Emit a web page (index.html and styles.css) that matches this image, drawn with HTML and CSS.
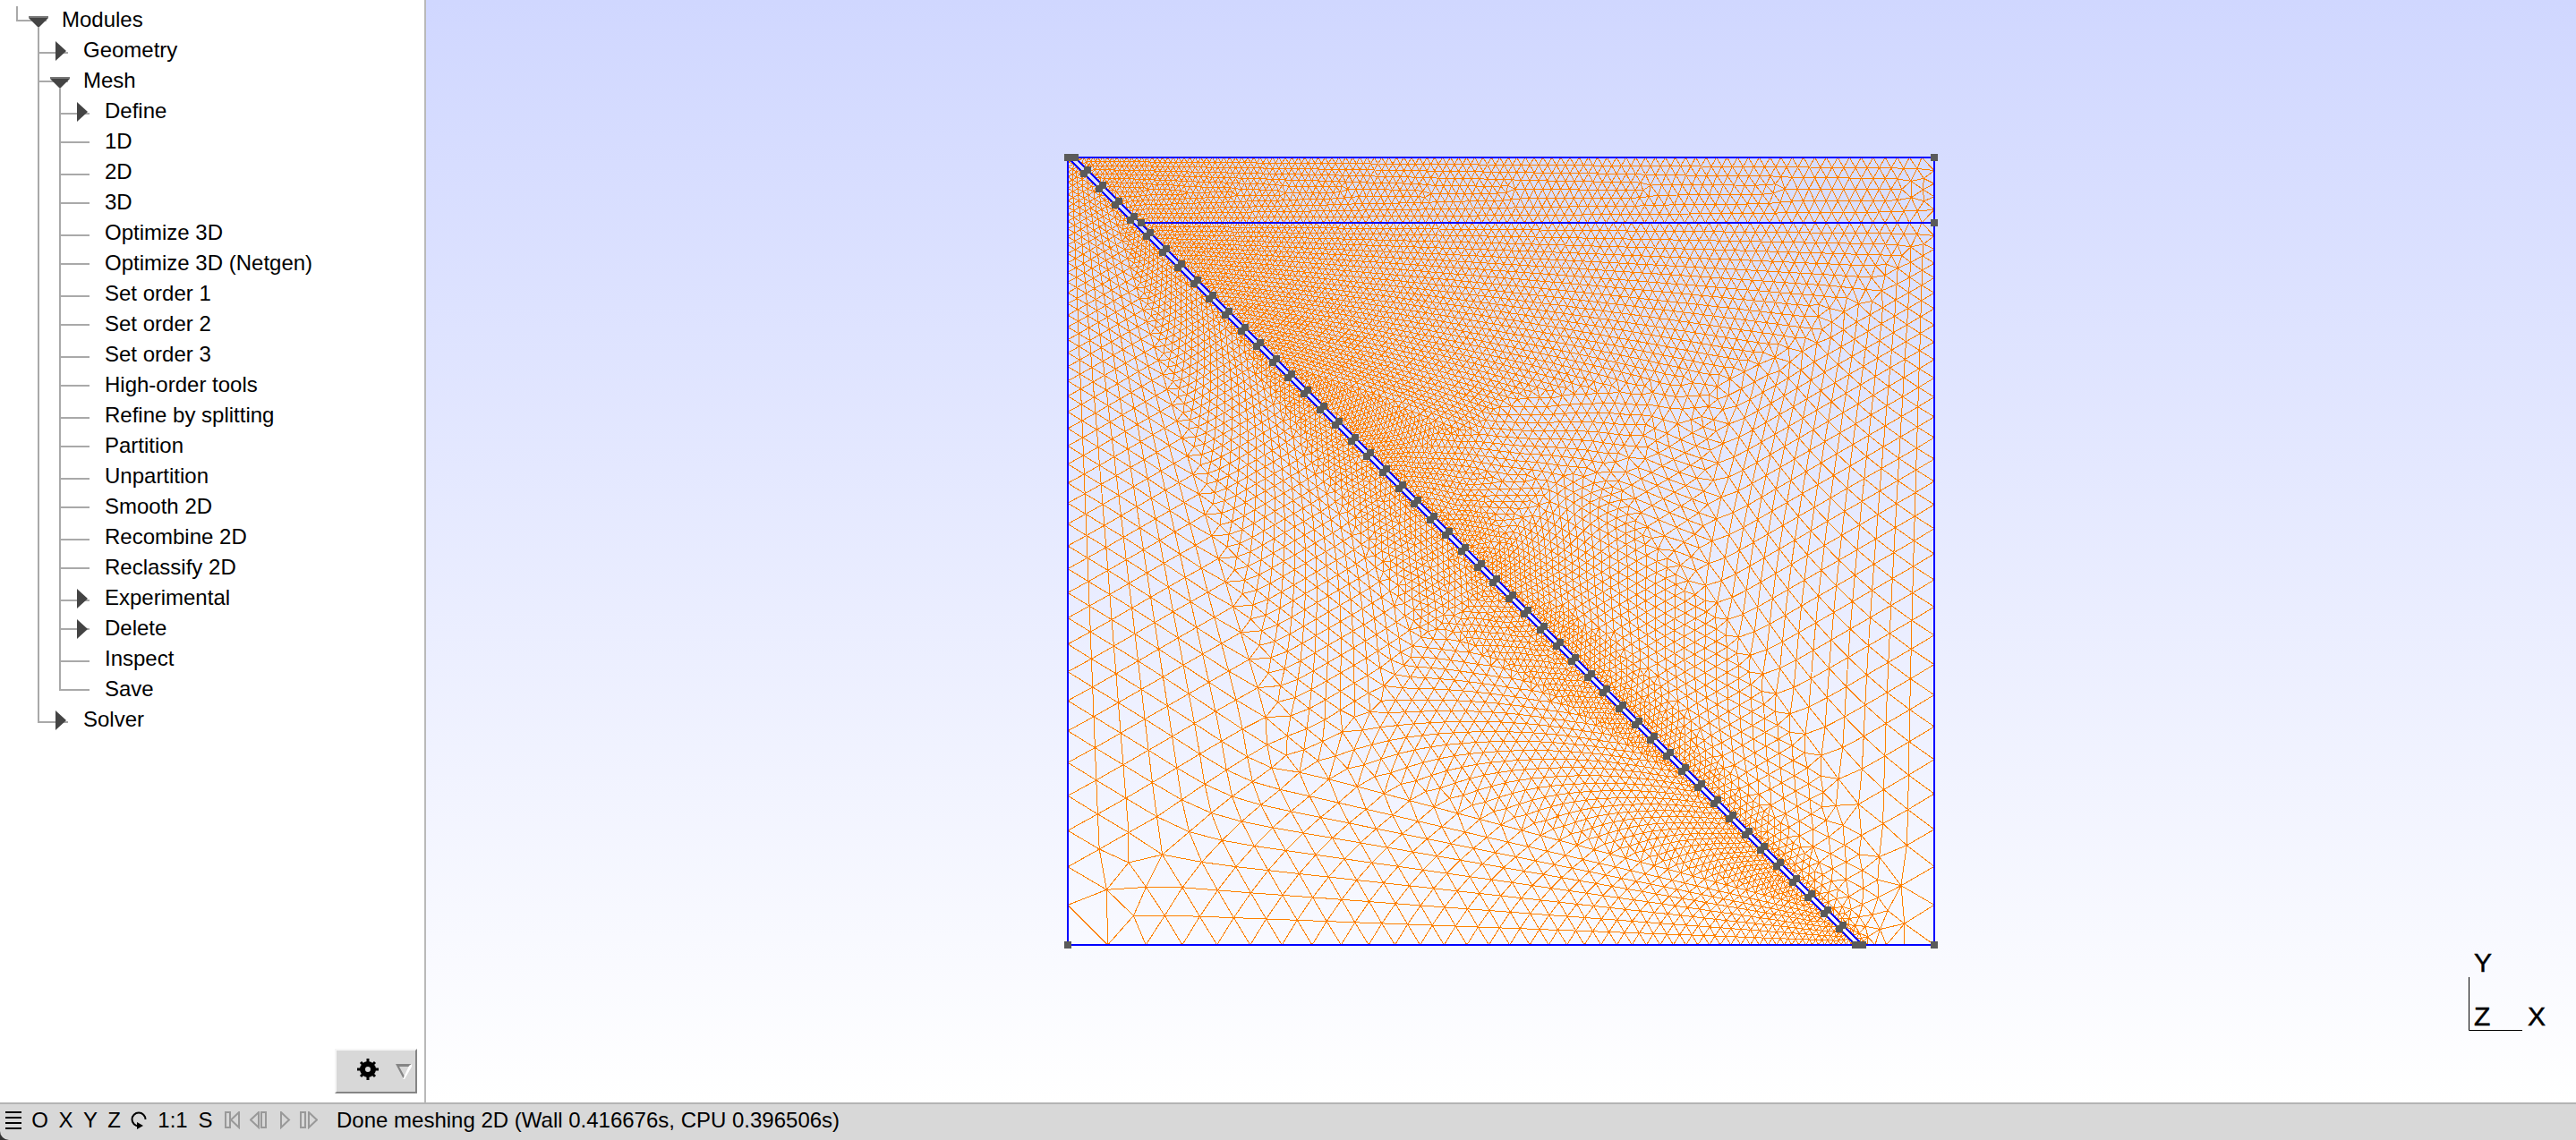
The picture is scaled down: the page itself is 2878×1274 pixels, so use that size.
FILE: index.html
```html
<!DOCTYPE html>
<html lang="en">
<head>
<meta charset="utf-8">
<title>Gmsh</title>
<link rel="stylesheet" href="styles.css">
</head>
<body>
<svg width="0" height="0" class="defs" aria-hidden="true">
  <symbol id="open" viewBox="0 0 50 34"><path d="M14 14H36V16L26 26H24L14 16Z" fill="#444"/><path d="M14 14H36V16H14Z" fill="#777"/></symbol>
  <symbol id="closed" viewBox="0 0 50 34"><path d="M20 8L32 19L20 30Z" fill="#444"/></symbol>
</svg>
<div class="app">
  <div class="work">
    <aside class="side">
      <ul class="tree">
        <li>
          <button class="row"><svg><use href="#open"/></svg>Modules</button>
          <ul class="branch">
            <li><button class="row"><svg><use href="#closed"/></svg>Geometry</button></li>
            <li>
              <button class="row"><svg><use href="#open"/></svg>Mesh</button>
              <ul class="branch">
                <li><button class="row"><svg><use href="#closed"/></svg>Define</button></li>
                <li><button class="row leaf">1D</button></li>
                <li><button class="row leaf">2D</button></li>
                <li><button class="row leaf">3D</button></li>
                <li><button class="row leaf">Optimize 3D</button></li>
                <li><button class="row leaf">Optimize 3D (Netgen)</button></li>
                <li><button class="row leaf">Set order 1</button></li>
                <li><button class="row leaf">Set order 2</button></li>
                <li><button class="row leaf">Set order 3</button></li>
                <li><button class="row leaf">High-order tools</button></li>
                <li><button class="row leaf">Refine by splitting</button></li>
                <li><button class="row leaf">Partition</button></li>
                <li><button class="row leaf">Unpartition</button></li>
                <li><button class="row leaf">Smooth 2D</button></li>
                <li><button class="row leaf">Recombine 2D</button></li>
                <li><button class="row leaf">Reclassify 2D</button></li>
                <li><button class="row"><svg><use href="#closed"/></svg>Experimental</button></li>
                <li><button class="row"><svg><use href="#closed"/></svg>Delete</button></li>
                <li><button class="row leaf">Inspect</button></li>
                <li><button class="row leaf">Save</button></li>
              </ul>
            </li>
            <li><button class="row"><svg><use href="#closed"/></svg>Solver</button></li>
          </ul>
        </li>
      </ul>
      <button class="gear" aria-label="Options">
        <svg width="88" height="46" viewBox="0 0 88 46">
          <g transform="translate(35 21)">
            <circle r="6" fill="none" stroke="#000" stroke-width="6"/>
            <g stroke="#000" stroke-width="3">
              <path d="M0 -12V-7M0 12V7M-12 0H-7M12 0H7M-8 -8L-5 -5M8 8L5 5M-8 8L-5 5M8 -8L5 -5"/>
            </g>
          </g>
          <path d="M66 15H84L82 18H70L76 29L75 32Z" fill="#858585"/>
          <path d="M84 15V18L76 32H74L81 17Z" fill="#fff"/>
        </svg>
      </button>
    </aside>
    <main class="view">
      <svg class="scene" viewBox="0 0 2402 1232">
        <path id="mesh" class="mesh"/>
        <path class="edge" d="M717 176H1685V1056H717ZM799 249H1685"/>
        <path class="fault" d="M717 176L1597 1056M725 176L1605 1056" stroke-width="1.5"/>
        <path id="nodes" class="nodes"/>
      </svg>
      <svg class="axes" width="92" height="108" viewBox="0 0 92 108">
        <path d="M2.500 44V103.500H62" fill="none" stroke="#000"/>
        <g stroke="#000" stroke-width="0.5">
          <text x="8" y="38">Y</text>
          <text x="8" y="98">Z</text>
          <text x="68" y="98">X</text>
        </g>
      </svg>
    </main>
  </div>
  <footer class="status">
    <div class="tools">
      <button class="w18" aria-label="Menu"><svg width="18" height="20" viewBox="0 0 18 20"><path d="M0 1H18M0 7H18M0 13H18M0 19H18" stroke="#000" stroke-width="2"/></svg></button>
      <button class="w19">O</button>
      <button class="w17">X</button>
      <button class="w16">Y</button>
      <button class="w15">Z</button>
      <button class="w18" aria-label="Rotate"><svg width="18" height="20" viewBox="0 0 18 20"><path d="M16.500 9A7.500 7.500 0 1 0 9 16.500" fill="none" stroke="#000" stroke-width="2"/><path d="M7 12L14 16L7 20Z"/></svg></button>
      <button class="w36">1:1</button>
      <button class="w15">S</button>
    </div>
    <div class="player">
      <button aria-label="Rewind"><svg width="20" height="20" viewBox="0 0 20 20"><path d="M1 1H6V18H1ZM16 1V18L7 9.500Z"/></svg></button>
      <button aria-label="Step back"><svg width="20" height="20" viewBox="0 0 20 20"><path d="M18 1H13V18H18ZM10 1V18L1 9.500Z"/></svg></button>
      <button aria-label="Play"><svg width="20" height="20" viewBox="0 0 20 20"><path d="M7 1V18L16 9.500Z"/></svg></button>
      <button aria-label="Step forward"><svg width="20" height="20" viewBox="0 0 20 20"><path d="M1 1H6V18H1ZM10 1V18L19 9.500Z"/></svg></button>
    </div>
    <output class="message">Done meshing 2D (Wall 0.416676s, CPU 0.396506s)</output>
  </footer>
</div>
<script src="mesh.js"></script>
</body>
</html>
```
FILE: styles.css
```css
* { box-sizing: border-box; }
html, body { height: 100%; margin: 0; }
body {
  font: 24px/34px "Liberation Sans", Arial, sans-serif;
  color: #000;
  background: #333;
}
button {
  font: inherit;
  color: inherit;
  background: none;
  border: 0;
  padding: 0;
  display: flex;
  align-items: center;
}
ul { list-style: none; margin: 0; padding: 0; }
svg { display: block; flex: none; }
.defs { position: absolute; }

.app { display: flex; flex-direction: column; height: 100vh; }
.work { display: flex; flex: 1; min-height: 0; }

.side {
  display: flex;
  flex-direction: column;
  justify-content: space-between;
  width: 476px;
  flex: none;
  padding: 4px 8px 10px 0;
  background: #fff;
  border-right: 2px solid #b9b9b9;
}
.tree { padding-left: 18px; }
.tree li {
  --y: 18px;
  background:
    linear-gradient(#a9a9a9, #a9a9a9) 0 var(--y) / 34px 2px no-repeat,
    linear-gradient(#a9a9a9, #a9a9a9) 0 0 / 2px 100% no-repeat;
}
.branch > li:nth-child(odd) { --y: 20px; }
.branch > li:last-child {
  background:
    linear-gradient(#a9a9a9, #a9a9a9) 0 var(--y) / 34px 2px no-repeat,
    linear-gradient(#a9a9a9, #a9a9a9) 0 0 / 2px var(--y) no-repeat;
}
.tree > li {
  background:
    linear-gradient(#a9a9a9, #a9a9a9) 0 var(--y) / 34px 2px no-repeat,
    linear-gradient(#a9a9a9, #a9a9a9) 0 3px / 2px 15px no-repeat;
}
.branch {
  margin: -8px 0 0 24px;
  padding-top: 8px;
  background: linear-gradient(#a9a9a9, #a9a9a9) 0 0 / 2px 8px no-repeat;
}
.row {
  height: 34px;
  line-height: 36px;
  align-items: flex-start;
  white-space: nowrap;
}
.row svg { width: 50px; height: 34px; margin-right: 1px; }
.leaf { padding-left: 51px; }
.gear {
  align-self: flex-end;
  background: #d8d8d8;
  border: 2px solid;
  border-color: #f6f6f6 #858585 #858585 #f6f6f6;
}

.view {
  position: relative;
  flex: 1;
  min-width: 0;
  background: linear-gradient(#d0d7ff, #fff);
}
.scene { width: 100%; height: 100%; shape-rendering: crispEdges; }
.mesh { fill: none; stroke: #ff8000; stroke-width: 1px; }
.edge { fill: none; stroke: #00f; stroke-width: 2px; }
.fault { fill: none; stroke: #00f; }
.nodes { fill: #5a5a5a; }
.axes { position: absolute; right: 30px; bottom: 76px; font-size: 30px; }

.status {
  display: flex;
  align-items: center;
  flex: none;
  height: 42px;
  padding: 0 6px 4px;
  background: #d8d8d8;
  border-top: 2px solid #b4b4b4;
  border-bottom-left-radius: 10px;
  white-space: nowrap;
}
.status button { justify-content: center; }
.tools { display: flex; gap: 11px; }
.player { display: flex; gap: 8px; margin: 0 21px 0 14px; }
.player path { fill: none; stroke: #999; stroke-width: 2px; }
.w15 { width: 15px; }
.w16 { width: 16px; }
.w17 { width: 17px; }
.w18 { width: 18px; }
.w19 { width: 19px; }
.w36 { width: 36px; }
```
FILE: mesh.js
```js
// Triangulates the three faces around the fault and draws the result.
const L = 717, T = 176, R = 1685, B = 1056, MID = 249;
const SMALL = 5, SEGMENTS = 50, STEP = (B - T) / SEGMENTS;

// "fault" is the index of the polygon side that lies on the fault.
const faces = [
  {
    poly: [[L, T], [1597, B], [L, B]],
    fault: 0,
    size: (x, y) => SMALL + 41 * Math.max(0, (y - T) - (x - L)) / (B - T)
  },
  {
    poly: [[725, T], [R, T], [R, MID], [798, MID]],
    fault: 3,
    size: (x) => SMALL + 9 * Math.max(0, (x - 725) / (R - 725))
  },
  {
    poly: [[798, MID], [R, MID], [R, B], [1605, B]],
    fault: 3,
    size: (x, y) => {
      const xd = 798 + (y - MID);
      const t = Math.min(1, Math.max(0, (x - xd) / (R - xd)));
      return SMALL + (9 + 31 * (y - MID) / (B - MID)) * Math.pow(t, 1.1);
    }
  }
];

let seed = 7;
const rnd = () => (seed = (seed * 16807) % 2147483647) / 2147483647;

function splitEdge(a, b, size) {
  const len = Math.hypot(b[0] - a[0], b[1] - a[1]);
  const n = 400, acc = [0];
  for (let i = 1; i <= n; i++) {
    const t = (i - 0.5) / n;
    acc.push(acc[i - 1] + len / n / size(a[0] + (b[0] - a[0]) * t, a[1] + (b[1] - a[1]) * t));
  }
  const count = Math.max(1, Math.round(acc[n])), out = [];
  let j = 0;
  for (let k = 0; k < count; k++) {
    const goal = acc[n] * k / count;
    while (j < n && acc[j + 1] <= goal) j++;
    const t = (j + (goal - acc[j]) / (acc[j + 1] - acc[j])) / n;
    out.push([a[0] + (b[0] - a[0]) * t, a[1] + (b[1] - a[1]) * t]);
  }
  return out;
}

function fill(face) {
  const { poly, size } = face;
  const cx = poly.reduce((s, p) => s + p[0], 0) / poly.length;
  const cy = poly.reduce((s, p) => s + p[1], 0) / poly.length;
  const sides = poly.map((a, i) => {
    const b = poly[(i + 1) % poly.length];
    const len = Math.hypot(b[0] - a[0], b[1] - a[1]);
    let nx = -(b[1] - a[1]) / len, ny = (b[0] - a[0]) / len;
    if ((cx - a[0]) * nx + (cy - a[1]) * ny < 0) { nx = -nx; ny = -ny; }
    return { a, b, nx, ny };
  });
  const pts = [], grid = new Map(), cell = 10;
  const key = (i, j) => i * 1000 + j;
  const add = (x, y, ang) => {
    pts.push([x, y, ang]);
    const k = key(Math.floor(x / cell), Math.floor(y / cell));
    if (!grid.has(k)) grid.set(k, []);
    grid.get(k).push(pts.length - 1);
  };
  const free = (x, y, r) => {
    const n = Math.ceil(r / cell), gi = Math.floor(x / cell), gj = Math.floor(y / cell);
    for (let i = gi - n; i <= gi + n; i++) for (let j = gj - n; j <= gj + n; j++) {
      const list = grid.get(key(i, j));
      if (list) for (const q of list) {
        if (Math.hypot(pts[q][0] - x, pts[q][1] - y) < r) return false;
      }
    }
    return true;
  };
  const queue = [], late = [];
  sides.forEach((s, i) => {
    const ang = Math.atan2(s.b[1] - s.a[1], s.b[0] - s.a[0]);
    for (const p of splitEdge(s.a, s.b, size)) {
      (i === face.fault ? late : queue).push(pts.length);
      add(p[0], p[1], ang);
    }
  });
  const fixed = pts.length;
  const grow = list => {
    for (let q = 0; q < list.length; q++) {
      const [px, py, ang] = pts[list[q]];
      for (let k = 0; k < 6; k++) {
        const a = ang + (k + 1) * Math.PI / 3;
        let h = size(px, py);
        h = (h + size(px + h * Math.cos(a), py + h * Math.sin(a))) / 2;
        const x = px + h * Math.cos(a), y = py + h * Math.sin(a);
        if (sides.every(s => (x - s.a[0]) * s.nx + (y - s.a[1]) * s.ny > 0.5 * h) && free(x, y, 0.74 * h)) {
          list.push(pts.length);
          add(x, y, a);
        }
      }
    }
  };
  grow(queue);
  grow(late);
  return { pts, fixed };
}

function delaunay(src) {
  const P = src.map(p => [p[0] + (rnd() - 0.5) * 1e-3, p[1] + (rnd() - 0.5) * 1e-3]);
  const n = P.length;
  P.push([-50000, -40000], [50000, -40000], [0, 60000]);
  const V = [n, n + 1, n + 2], N = [-1, -1, -1], dead = [false];
  const orient = (a, b, p) => (b[0] - a[0]) * (p[1] - a[1]) - (b[1] - a[1]) * (p[0] - a[0]);
  const inside = (t, p) => {
    const a = P[V[3 * t]], b = P[V[3 * t + 1]], c = P[V[3 * t + 2]];
    const ax = a[0] - p[0], ay = a[1] - p[1], bx = b[0] - p[0], by = b[1] - p[1], qx = c[0] - p[0], qy = c[1] - p[1];
    return (ax * ax + ay * ay) * (bx * qy - qx * by) - (bx * bx + by * by) * (ax * qy - qx * ay) +
      (qx * qx + qy * qy) * (ax * by - bx * ay) > 0;
  };
  let last = 0;
  for (let i = 0; i < n; i++) {
    const p = P[i];
    let t = last;
    for (let guard = 0; guard < 20000; guard++) {
      let moved = false;
      for (let e = 0; e < 3; e++) {
        const next = N[3 * t + e];
        if (next >= 0 && orient(P[V[3 * t + (e + 1) % 3]], P[V[3 * t + (e + 2) % 3]], p) < 0) {
          t = next; moved = true; break;
        }
      }
      if (!moved) break;
    }
    const stack = [t], rim = [];
    const hole = new Set([t]);
    while (stack.length) {
      const c = stack.pop();
      for (let e = 0; e < 3; e++) {
        const o = N[3 * c + e];
        if (o >= 0 && hole.has(o)) continue;
        if (o >= 0 && inside(o, p)) { hole.add(o); stack.push(o); continue; }
        rim.push([V[3 * c + (e + 1) % 3], V[3 * c + (e + 2) % 3], o]);
      }
    }
    for (const c of hole) dead[c] = true;
    const starts = new Map(), ends = new Map();
    for (const r of rim) {
      const id = dead.length;
      dead.push(false);
      V.push(i, r[0], r[1]);
      N.push(r[2], -1, -1);
      starts.set(r[0], id);
      ends.set(r[1], id);
      if (r[2] >= 0) for (let e = 0; e < 3; e++) {
        if (V[3 * r[2] + (e + 1) % 3] === r[1] && V[3 * r[2] + (e + 2) % 3] === r[0]) N[3 * r[2] + e] = id;
      }
      last = id;
    }
    for (const r of rim) {
      const id = starts.get(r[0]);
      N[3 * id + 1] = starts.get(r[1]);
      N[3 * id + 2] = ends.get(r[0]);
    }
  }
  const edges = [];
  for (let t = 0; t < dead.length; t++) {
    if (dead[t]) continue;
    for (let e = 0; e < 3; e++) {
      const a = V[3 * t + e], b = V[3 * t + (e + 1) % 3];
      if (a < b && b < n) edges.push([a, b]);
    }
  }
  return edges;
}

function smooth(pts, fixed, edges) {
  const sum = pts.map(() => [0, 0, 0]);
  for (const [a, b] of edges) {
    sum[a][0] += pts[b][0]; sum[a][1] += pts[b][1]; sum[a][2]++;
    sum[b][0] += pts[a][0]; sum[b][1] += pts[a][1]; sum[b][2]++;
  }
  for (let i = fixed; i < pts.length; i++) {
    if (!sum[i][2]) continue;
    pts[i][0] = (pts[i][0] + sum[i][0] / sum[i][2]) / 2;
    pts[i][1] = (pts[i][1] + sum[i][1] / sum[i][2]) / 2;
  }
}

let path = "";
for (const face of faces) {
  const { pts, fixed } = fill(face);
  let edges = delaunay(pts);
  for (let round = 0; round < 2; round++) {
    for (let k = 0; k < 2; k++) smooth(pts, fixed, edges);
    edges = delaunay(pts);
  }
  for (const [a, b] of edges) {
    path += `M${pts[a][0].toFixed(1)} ${pts[a][1].toFixed(1)}L${pts[b][0].toFixed(1)} ${pts[b][1].toFixed(1)}`;
  }
}
document.getElementById("mesh").setAttribute("d", path);

const nodes = [[L, T], [725, T], [R, T], [R, MID], [799, MID], [L, B], [R, B], [1597, B], [1605, B]];
for (let k = 1; k < SEGMENTS; k++) {
  nodes.push([L + k * STEP, T + k * STEP], [L + 4 + k * STEP, T - 4 + k * STEP]);
}
document.getElementById("nodes").setAttribute("d",
  nodes.map(([x, y]) => `M${Math.round(x) - 4} ${Math.round(y) - 4}h8v8h-8z`).join(""));
```
